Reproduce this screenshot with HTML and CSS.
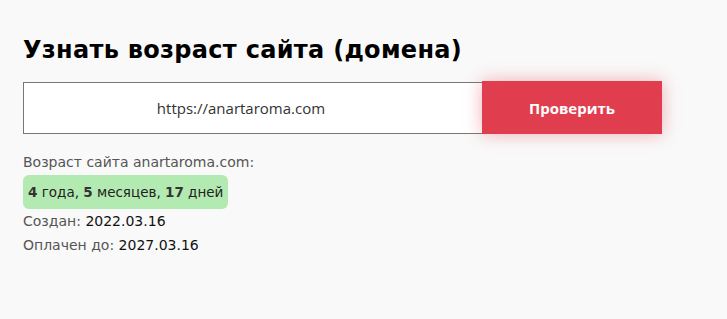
FILE: index.html
```html
<html>

<head>
  <meta charset="utf8">
  <title>Узнать возраст сайта</title>
  <link rel="stylesheet" href="styles.css">
</head>

<body>
  <section class="checker">
    <h1>Узнать возраст сайта (домена)</h1>
    <form class="check-form">
      <input class="domain" type="text" value="https://anartaroma.com">
      <button class="submit" type="button">Проверить</button>
    </form>
    <div class="result">
      <p class="label">Возраст сайта anartaroma.com:</p>
      <p class="age"><b>4</b> года, <b>5</b> месяцев, <b>17</b> дней</p>
      <p class="label">Создан: <span class="value">2022.03.16</span></p>
      <p class="label">Оплачен до: <span class="value">2027.03.16</span></p>
    </div>
  </section>
</body>

</html>
```

FILE: styles.css
```css
body {
  margin: 0;
  background: #f9f9f9;
  color: #222;
  font: 14px/1.4 "DejaVu Sans", sans-serif;
  overflow: hidden;
}

.checker {
  padding: 33px 23px 0;
}

h1 {
  margin: 0 0 14px;
  font-size: 24px;
  line-height: 34px;
  font-weight: bold;
  letter-spacing: 0.3px;
  color: #000;
}

.check-form {
  display: flex;
  margin: 0 0 16px;
}

.domain {
  box-sizing: border-box;
  width: 459px;
  height: 52px;
  margin-top: 1px;
  padding: 0 24px 0 0;
  border: 1px solid #777;
  border-right: none;
  background: #fff;
  text-align: center;
  color: #333;
  font: 15px "Open Sans", sans-serif;
  outline: none;
}

.submit {
  width: 180px;
  height: 53px;
  border: none;
  background: #e03e4e;
  color: #fff;
  font: bold 15px "Open Sans", sans-serif;
  box-shadow: 0 0 18px rgba(224, 62, 78, 0.4);
  cursor: pointer;
}

.result p {
  margin: 0;
}

.label {
  color: #555;
  font-size: 14px;
  line-height: 24px;
}

.value {
  color: #111;
}

.age {
  display: inline-block;
  margin: 1px 0 0 !important;
  padding: 5px 5px;
  border-radius: 6px;
  background: #b3eab1;
  color: #222;
  font-size: 13.5px;
  line-height: 24px;
}

.age b {
  color: #333;
}
```
